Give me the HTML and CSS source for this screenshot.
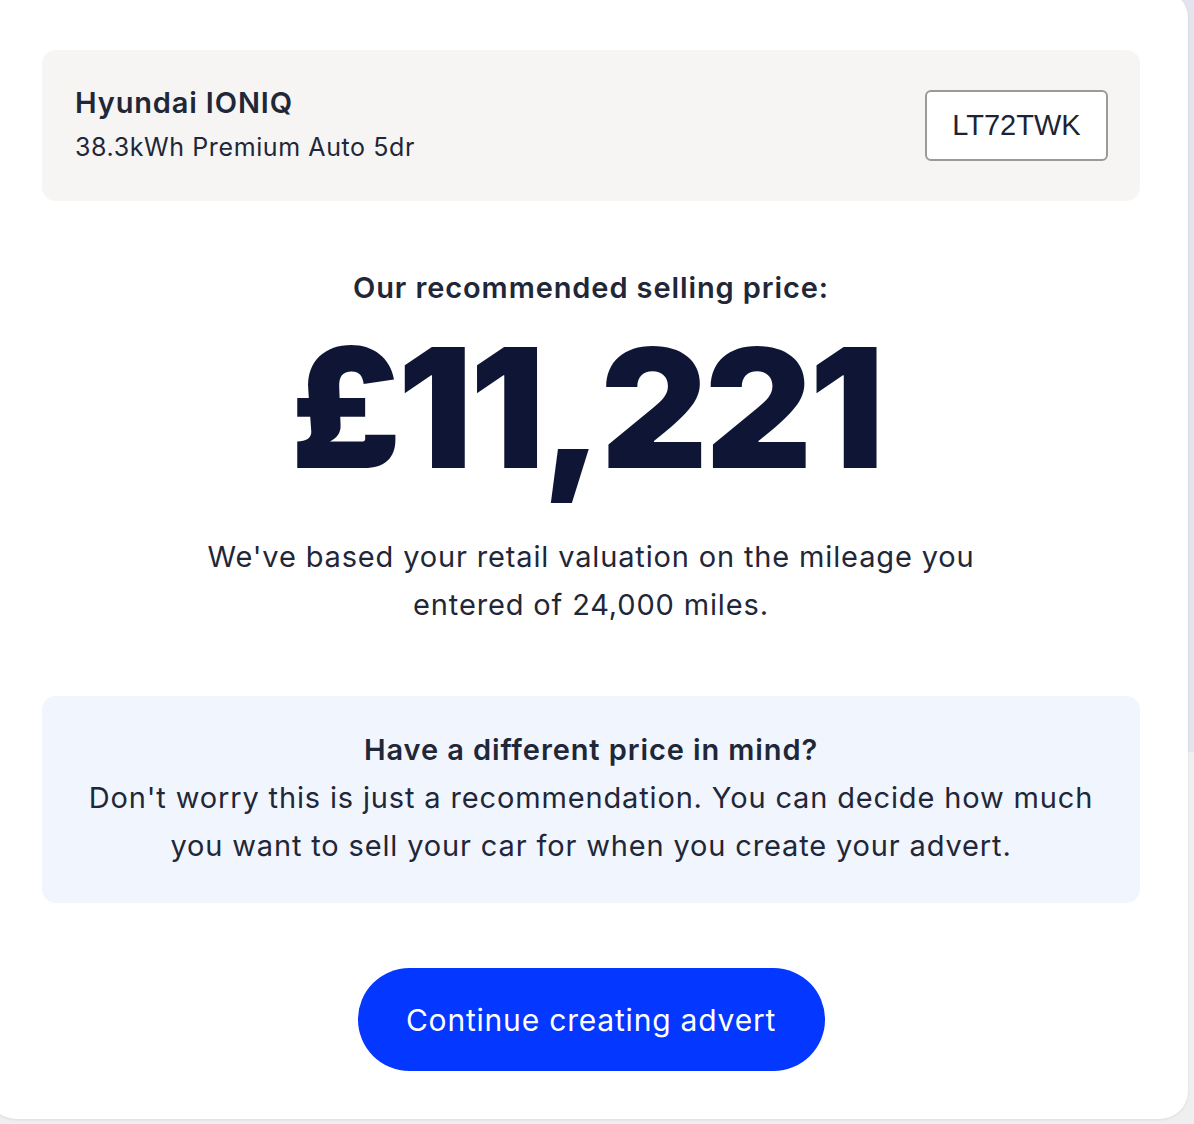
FILE: index.html
```html
<!DOCTYPE html>
<html>

<head>
    <title>Your valuation</title>
    <link rel="stylesheet" href="styles.css">
</head>

<body>

    <div class="card">
        <div class="vehicle">
            <div class="vehicle-info">
                <h2>Hyundai IONIQ</h2>
                <p>38.3kWh Premium Auto 5dr</p>
            </div>
            <div class="plate">LT72TWK</div>
        </div>

        <div class="valuation">
            <h3>Our recommended selling price:</h3>
            <div class="price">£11,221</div>
            <p class="mileage">We've based your retail valuation on the mileage you entered of 24,000 miles.</p>
        </div>

        <div class="notice">
            <h4>Have a different price in mind?</h4>
            <p>Don't worry this is just a recommendation. You can decide how much you want to sell your car for when you create your advert.</p>
        </div>

        <div class="actions">
            <button type="button">Continue creating advert</button>
        </div>
    </div>

</body>

</html>
```

FILE: styles.css
```css
html {
    background: linear-gradient(to bottom, #e4e4ee 0, #e4e4ee 752px, #efefef 752px);
    min-height: 100%;
}

body {
    font-family: Inter, "Open Sans", Arial, sans-serif;
    color: #1f2738;
    margin: 0;
    padding: 0;
    overflow: hidden;
    height: 1124px;
}

.card {
    background: #fff;
    width: 1200px;
    height: 1129px;
    margin: -10px 0 0 -12px;
    padding: 60px 48px 0 54px;
    box-sizing: border-box;
    border-radius: 28px;
    box-shadow: 0 1px 3px rgba(0, 0, 0, 0.08);
}

.vehicle {
    background: #f6f5f4;
    border-radius: 14px;
    height: 151px;
    padding: 0 32px 0 33px;
    box-sizing: border-box;
    display: flex;
    justify-content: space-between;
    align-items: center;
}

.vehicle-info h2 {
    font-size: 29px;
    font-weight: 600;
    letter-spacing: 0.85px;
    line-height: 42px;
    margin: 0;
}

.vehicle-info p {
    font-size: 25px;
    letter-spacing: 0.6px;
    line-height: 46px;
    margin: 0;
}

.plate {
    background: #fff;
    border: 2px solid #9a9a9a;
    border-radius: 6px;
    width: 183px;
    height: 71px;
    box-sizing: border-box;
    display: flex;
    align-items: center;
    justify-content: center;
    font-family: "Liberation Sans", Arial, sans-serif;
    font-size: 29px;
    color: #1c2433;
}

.valuation {
    text-align: center;
}

.valuation h3 {
    font-size: 29px;
    font-weight: 600;
    letter-spacing: 0.9px;
    line-height: 40px;
    margin: 67px 0 0;
}

.price {
    font-size: 166px;
    font-weight: 900;
    letter-spacing: -3px;
    line-height: 201px;
    color: #0e1535;
    margin-top: -1px;
    padding-right: 10px;
}

.mileage {
    font-size: 29px;
    letter-spacing: 0.85px;
    line-height: 48px;
    max-width: 820px;
    margin: 25px auto 0;
}

.notice {
    background: #f1f5fd;
    border-radius: 14px;
    margin-top: 67px;
    height: 207px;
    padding-top: 30px;
    box-sizing: border-box;
    text-align: center;
}

.notice h4 {
    font-size: 29px;
    font-weight: 600;
    letter-spacing: 0.9px;
    line-height: 48px;
    margin: 0;
}

.notice p {
    font-size: 29px;
    letter-spacing: 0.85px;
    line-height: 48px;
    margin: 0 auto;
    max-width: 1040px;
}

.actions {
    display: flex;
    justify-content: center;
    margin-top: 65px;
}

button {
    background: #0437ff;
    color: #fff;
    border: none;
    border-radius: 52px;
    width: 467px;
    height: 103px;
    font-family: Inter, "Open Sans", Arial, sans-serif;
    font-size: 30px;
    letter-spacing: 0.8px;
    cursor: pointer;
}
```
